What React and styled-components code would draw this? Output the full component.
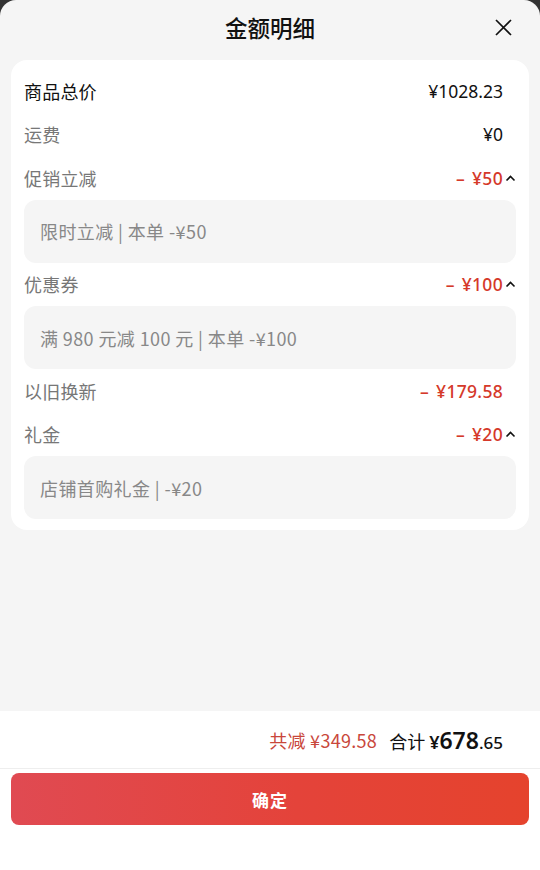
import React from "react";
import styled, { createGlobalStyle } from "styled-components";

const Global = createGlobalStyle`
  html, body { margin: 0; padding: 0; background: #333; }
  body { font-family: "Noto Sans CJK SC", "Noto Sans", sans-serif; -webkit-font-smoothing: antialiased; }
  * { box-sizing: border-box; }
`;

const Sheet = styled.div`
  width: 540px;
  height: 870px;
  background: #f5f5f5;
  border-radius: 16px 16px 0 0;
  display: flex;
  flex-direction: column;
  overflow: hidden;
`;

const Header = styled.div`
  height: 60px;
  display: flex;
  align-items: center;
  justify-content: center;
  position: relative;
  flex-shrink: 0;
`;

const Title = styled.div`
  font-size: 22.5px;
  font-weight: 500;
  color: #111;
  margin-top: -7px;
`;

const Close = styled.button`
  position: absolute;
  right: 27px;
  top: 18px;
  width: 19px;
  height: 19px;
  padding: 0;
  border: none;
  background: none;
  display: flex;
`;

const Card = styled.div`
  margin: 0 11px;
  background: #fff;
  border-radius: 16px;
  padding: 9px 13px 11px;
  display: flex;
  flex-direction: column;
`;

const Row = styled.div`
  height: 43.5px;
  display: flex;
  align-items: center;
  justify-content: space-between;
`;

const Label = styled.span`
  font-size: 18px;
  letter-spacing: 0.2px;
  color: ${(p) => (p.$strong ? "#111" : "#777")};
`;

const ValueWrap = styled.div`
  display: flex;
  align-items: center;
`;

const Value = styled.span`
  font-family: "Noto Sans", sans-serif;
  font-size: 17.5px;
  letter-spacing: ${(p) => (p.$red ? "0.3px" : "0")};
  color: ${(p) => (p.$red ? "#d5392a" : "#111")};
  font-weight: ${(p) => (p.$red ? 500 : 400)};
  white-space: pre;
`;

const Minus = styled.span`
  margin-right: 7px;
`;

const ChevronSlot = styled.span`
  width: 13px;
  display: flex;
  justify-content: flex-end;
  align-items: center;
`;

const Detail = styled.div`
  height: 63px;
  background: #f5f5f5;
  border-radius: 12px;
  display: flex;
  align-items: center;
  padding: 0 16px;
  font-size: 18px;
  letter-spacing: 0.4px;
  color: #888;
`;

const Spacer = styled.div`
  flex: 1;
`;

const Footer = styled.div`
  background: #fff;
  height: 159px;
  flex-shrink: 0;
  display: flex;
  flex-direction: column;
`;

const Summary = styled.div`
  height: 58px;
  display: flex;
  align-items: center;
  justify-content: flex-end;
  padding: 0 37px 0 0;
  border-bottom: 1px solid #eeeeee;
  gap: 12px;
`;

const Saved = styled.span`
  font-size: 18px;
  letter-spacing: 0.3px;
  color: #c9473b;
`;

const Total = styled.span`
  font-size: 18px;
  color: #111;
  display: flex;
  align-items: baseline;
  gap: 4px;
`;

const Price = styled.span`
  font-family: "Noto Sans", sans-serif;
  font-size: 18px;
  font-weight: 600;
  b { font-size: 23px; font-weight: 600; }
  small { font-size: 17px; font-weight: 500; }
`;

const Confirm = styled.button`
  margin: 4px 11px 0;
  height: 52px;
  border: none;
  border-radius: 8px;
  background: linear-gradient(90deg, #e04a52 0%, #e4433a 55%, #e5432d 100%);
  color: #fff;
  font-family: "Noto Sans CJK SC", sans-serif;
  font-size: 17px;
  font-weight: 700;
  letter-spacing: 1px;
`;

const Chevron = () => (
  <svg width="11" height="8" viewBox="0 0 11 8">
    <path d="M1.5 6.5 L5.5 2.5 L9.5 6.5" fill="none" stroke="#111" strokeWidth="1.6" />
  </svg>
);

const items = [
  { label: "商品总价", value: "¥1028.23", strong: true },
  { label: "运费", value: "¥0" },
  { label: "促销立减", value: "¥50", red: true, detail: "限时立减 | 本单 -¥50" },
  { label: "优惠券", value: "¥100", red: true, detail: "满 980 元减 100 元 | 本单 -¥100" },
  { label: "以旧换新", value: "¥179.58", red: true },
  { label: "礼金", value: "¥20", red: true, detail: "店铺首购礼金 | -¥20" },
];

export default function App() {
  return (
    <>
      <Global />
      <Sheet>
        <Header>
          <Title>金额明细</Title>
          <Close aria-label="close">
            <svg width="19" height="19" viewBox="0 0 19 19">
              <path d="M2 2 L17 17 M17 2 L2 17" stroke="#111" strokeWidth="1.7" fill="none" />
            </svg>
          </Close>
        </Header>
        <Card>
          {items.map((it) => (
            <React.Fragment key={it.label}>
              <Row>
                <Label $strong={it.strong}>{it.label}</Label>
                <ValueWrap>
                  <Value $red={it.red}>
                    {it.red && <Minus>–</Minus>}
                    {it.value}
                  </Value>
                  <ChevronSlot>{it.detail ? <Chevron /> : null}</ChevronSlot>
                </ValueWrap>
              </Row>
              {it.detail && <Detail>{it.detail}</Detail>}
            </React.Fragment>
          ))}
        </Card>
        <Spacer />
        <Footer>
          <Summary>
            <Saved>共减 ¥349.58</Saved>
            <Total>
              合计
              <Price>
                ¥<b>678</b>
                <small>.65</small>
              </Price>
            </Total>
          </Summary>
          <Confirm>确定</Confirm>
        </Footer>
      </Sheet>
    </>
  );
}
